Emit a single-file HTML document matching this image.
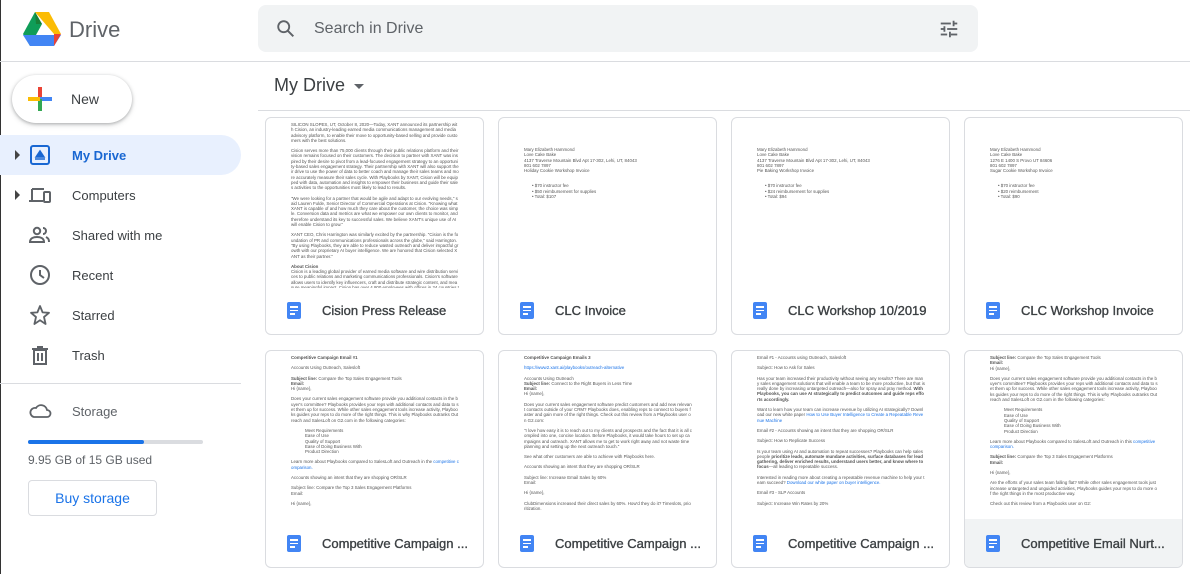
<!DOCTYPE html>
<html><head><meta charset="utf-8"><style>
*{box-sizing:border-box;margin:0;padding:0}
body{width:1190px;height:574px;overflow:hidden;background:#fff;font-family:"Liberation Sans",Arial,sans-serif;position:relative;color:#3c4043}
.abs{position:absolute}
.nav{position:absolute;left:0;width:241px;height:40px;display:flex;align-items:center;font-size:13px;color:#3c4043}
.nav .ic{position:absolute;left:28px;top:8px;width:24px;height:24px}
.nav .t{position:absolute;left:72px}
.card{position:absolute;width:219px;height:218px;border:1px solid #dadce0;border-radius:6px;overflow:hidden;background:#fff}
.prev{position:absolute;left:25px;top:4px;width:168px;height:166px;overflow:hidden;font-size:4.4px;line-height:5.3px;color:#555;word-break:break-all}
.prev p{margin-bottom:5px}
.cap{position:absolute;left:0;bottom:0;width:100%;height:48px;display:flex;align-items:center}
.cap .doc{position:absolute;left:21px;top:16px;width:14px;height:17px;background:#4285f4;border-radius:2px}
.cap .doc i{position:absolute;left:3px;width:8px;height:1.6px;background:#fff}
.cap .n{position:absolute;left:56px;font-size:13px;font-weight:normal;-webkit-text-stroke:0.35px #3c4043;color:#3c4043;white-space:nowrap}
</style></head><body>
<div class="abs" style="left:0;top:0;width:1px;height:574px;background:#333"></div>
<svg class="abs" style="left:23px;top:12px" width="38" height="34" viewBox="0 0 38 34">
<polygon points="12,0 26,0 38,22 31,22" fill="#fbbc04"/>
<polygon points="12,0 19,12 7,34 0,22" fill="#0f9d58"/>
<polygon points="0,23 7,34 31,34 38,23" fill="#4285f4"/>
<polygon points="31,22 38,22 31,34" fill="#ea4335"/>
<polygon points="12,0 19,12 13,12" fill="#188038"/>
</svg>
<div class="abs" style="left:69px;top:17px;font-size:22px;color:#5f6368">Drive</div>
<div class="abs" style="left:258px;top:5px;width:720px;height:47px;background:#f1f3f4;border-radius:8px"></div>
<svg class="abs" style="left:275px;top:18px" width="22" height="22" viewBox="0 0 24 24"><circle cx="9.5" cy="9.5" r="6" fill="none" stroke="#5f6368" stroke-width="2"/><line x1="14" y1="14" x2="20" y2="20" stroke="#5f6368" stroke-width="2.2"/></svg>
<div class="abs" style="left:314px;top:20px;font-size:16px;color:#5f6368">Search in Drive</div>
<svg class="abs" style="left:938px;top:18px" width="22" height="22" viewBox="0 0 24 24" fill="#5f6368"><rect x="3" y="5" width="11" height="2"/><rect x="16" y="3" width="2" height="6"/><rect x="18" y="5" width="3" height="2"/><rect x="3" y="11" width="3" height="2"/><rect x="6" y="9" width="2" height="6"/><rect x="10" y="11" width="11" height="2"/><rect x="3" y="17" width="7" height="2"/><rect x="12" y="15" width="2" height="6"/><rect x="14" y="17" width="7" height="2"/></svg>
<div class="abs" style="left:0;top:61px;width:1190px;height:1px;background:#dadce0"></div>
<div class="abs" style="left:12px;top:75px;width:120px;height:48px;border-radius:24px;box-shadow:0 1px 3px rgba(60,64,67,.35),0 2px 6px rgba(60,64,67,.15);background:#fff"></div>
<svg class="abs" style="left:27px;top:86px" width="26" height="26" viewBox="0 0 26 26"><rect x="11" y="1" width="4" height="12" fill="#ea4335"/><rect x="13" y="11" width="12" height="4" fill="#4285f4"/><rect x="11" y="13" width="4" height="12" fill="#34a853"/><rect x="1" y="11" width="12" height="4" fill="#fbbc04"/></svg>
<div class="abs" style="left:71px;top:91px;font-size:14px;color:#3c4043">New</div>
<div class="nav" style="top:135px;background:#e8f0fe;border-radius:0 20px 20px 0;color:#1967d2;font-weight:bold">
<span class="abs" style="left:15px;top:15px;border-left:5px solid #444;border-top:5px solid transparent;border-bottom:5px solid transparent"></span>
<svg class="ic" viewBox="0 0 24 24"><rect x="3" y="3" width="18" height="18" rx="2" fill="none" stroke="#1967d2" stroke-width="2"/><path d="M7 16h10M8 14l4-6 4 6z" stroke="#1967d2" stroke-width="1.5" fill="#1967d2"/></svg>
<span class="t">My Drive</span></div>
<div class="nav" style="top:175px">
<span class="abs" style="left:15px;top:15px;border-left:5px solid #444;border-top:5px solid transparent;border-bottom:5px solid transparent"></span>
<svg class="ic" viewBox="0 0 24 24"><path d="M4 6h12M4 6v11M1 18h14" stroke="#5f6368" stroke-width="2" fill="none"/><rect x="16" y="9" width="6" height="10" rx="1" fill="none" stroke="#5f6368" stroke-width="2"/></svg>
<span class="t">Computers</span></div>
<div class="nav" style="top:215px">
<svg class="ic" viewBox="0 0 24 24"><circle cx="9" cy="8" r="3.2" fill="none" stroke="#5f6368" stroke-width="2"/><path d="M2 19c0-4 4-5 7-5s7 1 7 5z" fill="none" stroke="#5f6368" stroke-width="2"/><path d="M15 5a3 3 0 010 6M18 14c2 1 3 2 3 5" fill="none" stroke="#5f6368" stroke-width="2"/></svg>
<span class="t">Shared with me</span></div>
<div class="nav" style="top:255px">
<svg class="ic" viewBox="0 0 24 24"><circle cx="12" cy="12" r="9" fill="none" stroke="#5f6368" stroke-width="2"/><path d="M12 7v5l4 3" fill="none" stroke="#5f6368" stroke-width="2"/></svg>
<span class="t">Recent</span></div>
<div class="nav" style="top:295px">
<svg class="ic" viewBox="0 0 24 24"><polygon points="12,3 14.6,9.4 21,9.8 16,14 17.6,21 12,17.2 6.4,21 8,14 3,9.8 9.4,9.4" fill="none" stroke="#5f6368" stroke-width="1.8" stroke-linejoin="round"/></svg>
<span class="t">Starred</span></div>
<div class="nav" style="top:335px">
<svg class="ic" viewBox="0 0 24 24"><path d="M6 7h12v14H6z M4 6h16 M9 4h6 M10 10v8 M14 10v8" fill="none" stroke="#5f6368" stroke-width="2"/></svg>
<span class="t">Trash</span></div>
<div class="abs" style="left:0;top:383px;width:241px;height:1px;background:#dadce0"></div>
<svg class="abs" style="left:28px;top:401px" width="24" height="20" viewBox="0 0 24 20"><path d="M6 16h13a3.5 3.5 0 000-7 6 6 0 00-11-2 4.5 4.5 0 00-2 9z" fill="none" stroke="#5f6368" stroke-width="1.8"/></svg>
<div class="abs" style="left:72px;top:404px;font-size:13px;color:#5f6368">Storage</div>
<div class="abs" style="left:28px;top:440px;width:175px;height:4px;background:#dadce0;border-radius:2px"></div>
<div class="abs" style="left:28px;top:440px;width:116px;height:4px;background:#1a73e8;border-radius:2px"></div>
<div class="abs" style="left:28px;top:453px;font-size:12px;color:#5f6368">9.95 GB of 15 GB used</div>
<div class="abs" style="left:28px;top:480px;width:129px;height:36px;border:1px solid #dadce0;border-radius:4px;color:#1a73e8;font-size:14px;text-align:center;line-height:34px">Buy storage</div>
<div class="abs" style="left:274px;top:75px;font-size:18px;color:#3c4043">My Drive</div>
<span class="abs" style="left:354px;top:84px;border-top:5px solid #5f6368;border-left:5px solid transparent;border-right:5px solid transparent"></span>
<div class="abs" style="left:258px;top:110px;width:932px;height:1px;background:#dadce0"></div>

<div class="card" style="left:265px;top:117px"><div class="prev"><p>SILICON SLOPES, UT, October 8, 2020—Today, XANT announced its partnership with Cision, an industry-leading earned media communications management and media advisory platform, to enable their move to opportunity-based selling and provide customers with the best solutions.</p><p>Cision serves more than 75,000 clients through their public relations platform and their vision remains focused on their customers. The decision to partner with XANT was inspired by their desire to pivot from a lead-focused engagement strategy to an opportunity-based sales engagement strategy. Their partnership with XANT will also support their drive to use the power of data to better coach and manage their sales teams and more accurately measure their sales cycle. With Playbooks by XANT, Cision will be equipped with data, automation and insights to empower their business and guide their sales activities to the opportunities most likely to lead to results.</p><p>"We were looking for a partner that would be agile and adapt to our evolving needs," said Lauren Fulde, Senior Director of Commercial Operations at Cision. "Knowing what XANT is capable of and how much they care about the customer, the choice was simple. Conversion data and metrics are what we empower our own clients to monitor, and therefore understand its key to successful sales. We believe XANT's unique use of AI will enable Cision to grow."</p><p>XANT CEO, Chris Harrington was similarly excited by the partnership. "Cision is the foundation of PR and communications professionals across the globe," said Harrington. "By using Playbooks, they are able to reduce wasted outreach and deliver impactful growth with our proprietary AI buyer intelligence. We are honored that Cision selected XANT as their partner."</p><p><b>About Cision</b><br>Cision is a leading global provider of earned media software and wire distribution services to public relations and marketing communications professionals. Cision's software allows users to identify key influencers, craft and distribute strategic content, and measure meaningful impact. Cision has over 4,800 employees with offices in 24 countries throughout the Americas, EMEA.</p></div><div class="cap"><div class="doc"><i style="top:4px"></i><i style="top:7.5px"></i><i style="top:11px;width:5px"></i></div><span class="n">Cision Press Release</span></div></div>

<div class="card" style="left:498px;top:117px"><div class="prev" style="top:29px"><p>Mary Elizabeth Hammond<br>Love Cake Bake<br>4137 Traverse Mountain Blvd Apt 17-302, Lehi, UT, 84043<br>801 602 7897<br>Holiday Cookie Workshop Invoice</p><p style="padding-left:8px;margin-top:10px">• $70 instructor fee<br>• $50 reimbursement for supplies<br>• Total: $107</p></div><div class="cap"><div class="doc"><i style="top:4px"></i><i style="top:7.5px"></i><i style="top:11px;width:5px"></i></div><span class="n">CLC Invoice</span></div></div>

<div class="card" style="left:731px;top:117px"><div class="prev" style="top:29px"><p>Mary Elizabeth Hammond<br>Love Cake Bake<br>4137 Traverse Mountain Blvd Apt 17-302, Lehi, UT, 84043<br>801 602 7897<br>Pie Baking Workshop Invoice</p><p style="padding-left:8px;margin-top:10px">• $70 instructor fee<br>• $24 reimbursement for supplies<br>• Total: $94</p></div><div class="cap"><div class="doc"><i style="top:4px"></i><i style="top:7.5px"></i><i style="top:11px;width:5px"></i></div><span class="n">CLC Workshop 10/2019</span></div></div>

<div class="card" style="left:964px;top:117px"><div class="prev" style="top:29px"><p>Mary Elizabeth Hammond<br>Love Cake Bake<br>1276 E 1400 S Provo UT 84606<br>801 602 7897<br>Sugar Cookie Workshop Invoice</p><p style="padding-left:8px;margin-top:10px">• $70 instructor fee<br>• $20 reimbursement<br>• Total: $90</p></div><div class="cap"><div class="doc"><i style="top:4px"></i><i style="top:7.5px"></i><i style="top:11px;width:5px"></i></div><span class="n">CLC Workshop Invoice</span></div></div>

<div class="card" style="left:265px;top:350px"><div class="prev"><p><b>Competitive Campaign Email #1</b></p><p>Accounts Using Outreach, Salesloft</p><p><b>Subject line:</b> Compare the Top Sales Engagement Tools<br><b>Email:</b><br>Hi {name},</p><p>Does your current sales engagement software provide you additional contacts in the buyer's committee? Playbooks provides your reps with additional contacts and data to set them up for success. While other sales engagement tools increase activity, Playbooks guides your reps to do more of the right things. This is why Playbooks outranks Outreach and SalesLoft on G2.com in the following categories:</p><p style="padding-left:14px">Meet Requirements<br>Ease of Use<br>Quality of Support<br>Ease of Doing Business With<br>Product Direction</p><p>Learn more about Playbooks compared to SalesLoft and Outreach in the <span style="color:#1a73e8">competitive comparison.</span></p><p>Accounts showing an intent that they are shopping OR/SLR</p><p>Subject line: Compare the Top 3 Sales Engagement Platforms<br>Email:</p><p>Hi {name},</p></div><div class="cap"><div class="doc"><i style="top:4px"></i><i style="top:7.5px"></i><i style="top:11px;width:5px"></i></div><span class="n">Competitive Campaign ...</span></div></div>

<div class="card" style="left:498px;top:350px"><div class="prev"><p><b>Competitive Campaign Emails 3</b></p><p style="color:#1a73e8">https://www2.xant.ai/playbooks/outreach-alternative</p><p>Accounts Using Outreach<br><b>Subject line:</b> Connect to the Right Buyers in Less Time<br><b>Email:</b><br>Hi {name},</p><p>Does your current sales engagement software predict customers and add new relevant contacts outside of your CRM? Playbooks does, enabling reps to connect to buyers faster and gain more of the right things. Check out this review from a Playbooks user on G2.com:</p><p>"I love how easy it is to reach out to my clients and prospects and the fact that it is all compiled into one, concise location. Before Playbooks, it would take hours to set up campaigns and outreach. XANT allows me to get to work right away and not waste time planning and setting up the next outreach touch."</p><p>See what other customers are able to achieve with Playbooks here.</p><p>Accounts showing an intent that they are shopping OR/SLR</p><p>Subject line: Increase Email Sales by 60%<br>Email:</p><p>Hi {name},</p><p>ClubDimensions increased their direct sales by 60%. How'd they do it? Timeslots, prioritization.</p></div><div class="cap"><div class="doc"><i style="top:4px"></i><i style="top:7.5px"></i><i style="top:11px;width:5px"></i></div><span class="n">Competitive Campaign ...</span></div></div>

<div class="card" style="left:731px;top:350px"><div class="prev"><p>Email #1 - Accounts using Outreach, Salesloft</p><p>Subject: How to Ask for Sales</p><p>Has your team increased their productivity without seeing any results? There are many sales engagement solutions that will enable a team to be more productive, but that is really done by increasing untargeted outreach—also for spray and pray method. <b>With Playbooks, you can use AI strategically to predict outcomes and guide reps efforts accordingly.</b></p><p>Want to learn how your team can increase revenue by utilizing AI strategically? Download our new white paper <span style="color:#1a73e8">How to Use Buyer Intelligence to Create a Repeatable Revenue Machine</span></p><p>Email #2 - Accounts showing an intent that they are shopping OR/SLR</p><p>Subject: How to Replicate Success</p><p>Is your team using AI and automation to repeat successes? Playbooks can help salespeople <b>prioritize leads, automate mundane activities, surface databases for lead gathering, deliver enriched results, understand users better, and know where to focus</b>—all leading to repeatable success.</p><p>Interested in reading more about creating a repeatable revenue machine to help your team succeed? <span style="color:#1a73e8">Download our white paper on buyer intelligence.</span></p><p>Email #3 - SLP Accounts</p><p>Subject: Increase Win Rates by 20%</p></div><div class="cap"><div class="doc"><i style="top:4px"></i><i style="top:7.5px"></i><i style="top:11px;width:5px"></i></div><span class="n">Competitive Campaign ...</span></div></div>

<div class="card" style="left:964px;top:350px"><div class="prev"><p><b>Subject line:</b> Compare the Top Sales Engagement Tools<br><b>Email:</b><br>Hi {name},</p><p>Does your current sales engagement software provide you additional contacts in the buyer's committee? Playbooks provides your reps with additional contacts and data to set them up for success. While other sales engagement tools increase activity, Playbooks guides your reps to do more of the right things. This is why Playbooks outranks Outreach and SalesLoft on G2.com in the following categories:</p><p style="padding-left:14px">Meet Requirements<br>Ease of Use<br>Quality of Support<br>Ease of Doing Business With<br>Product Direction</p><p>Learn more about Playbooks compared to SalesLoft and Outreach in this <span style="color:#1a73e8">competitive comparison.</span></p><p><b>Subject line:</b> Compare the Top 3 Sales Engagement Platforms<br><b>Email:</b></p><p>Hi {name},</p><p>Are the efforts of your sales team falling flat? While other sales engagement tools just increase untargeted and unguided activities, Playbooks guides your reps to do more of the right things in the most productive way.</p><p>Check out this review from a Playbooks user on G2:</p></div><div class="cap" style="background:#f1f3f4"><div class="doc"><i style="top:4px"></i><i style="top:7.5px"></i><i style="top:11px;width:5px"></i></div><span class="n">Competitive Email Nurt...</span></div></div>
</body></html>
